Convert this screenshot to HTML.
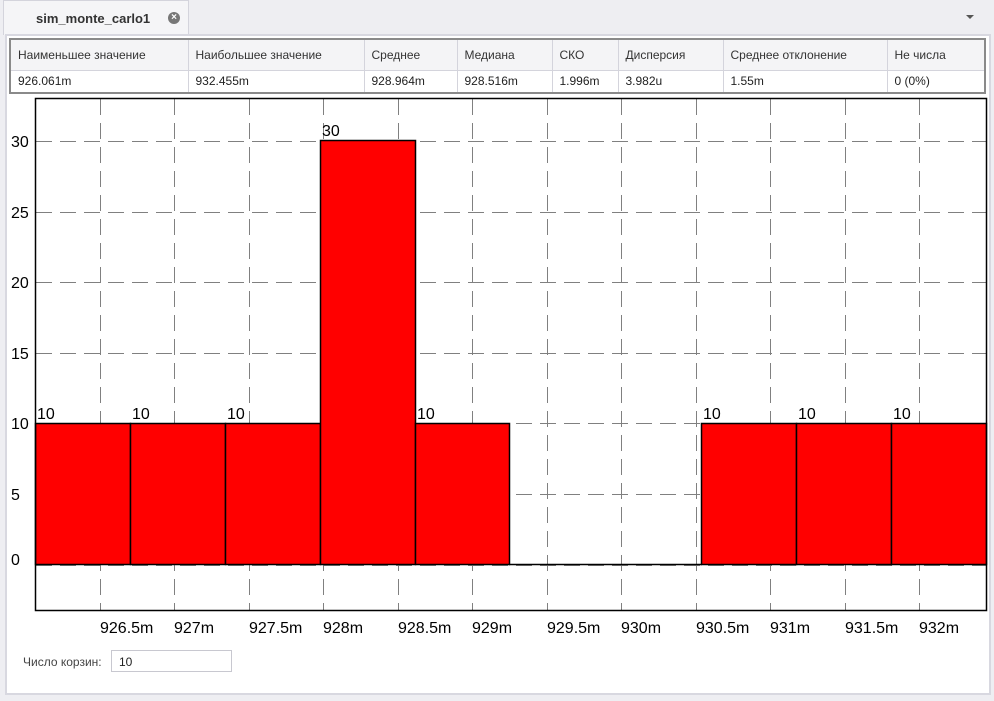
<!DOCTYPE html>
<html><head><meta charset="utf-8"><style>
body{margin:0;width:994px;height:701px;background:#eeeef2;font-family:"Liberation Sans","DejaVu Sans",sans-serif;position:relative;overflow:hidden}
.tab{position:absolute;left:3px;top:0;width:186px;height:35px;background:#f5f5f7;border:1px solid #d4d4dc;border-bottom:none;box-sizing:border-box}
.tab span{position:absolute;left:32px;top:10px;font-size:13px;font-weight:bold;color:#333}
.x{position:absolute;left:164px;top:11px;width:12px;height:12px;border-radius:50%;background:#777;color:#fff;font-size:10px;line-height:12px;text-align:center;font-weight:bold}
.dd{position:absolute;left:966px;top:15px;width:0;height:0;border-left:4px solid transparent;border-right:4px solid transparent;border-top:4px solid #555}
.panel{position:absolute;left:5px;top:34px;width:986px;height:661px;background:#fff;border:2px solid #d8d8e0;box-sizing:border-box}
table{position:absolute;left:9px;top:38px;width:977px;border-collapse:collapse;border:2px solid #8a8a8a;font-size:12px;color:#222;table-layout:fixed}
td{border-left:1px solid #d4d4dc;padding:0 7px;white-space:nowrap;overflow:hidden;box-sizing:border-box}
tr:first-child td{background:#f4f4f6;border-bottom:1px solid #d4d4dc;color:#333;height:31px}
tr:last-child td{height:23px}
.lbl{position:absolute;left:23px;top:655px;font-size:12px;color:#444}
.inp{position:absolute;left:111px;top:650px;width:121px;height:22px;border:1px solid #c8c8d0;box-sizing:border-box;font-size:12px;padding:4px 7px;color:#222}
</style></head><body>
<div class="tab"><span>sim_monte_carlo1</span><div class="x">×</div></div>
<div class="dd"></div>
<div class="panel"></div>
<table><colgroup><col style="width:178px"><col style="width:176px"><col style="width:93px"><col style="width:95px"><col style="width:66px"><col style="width:105px"><col style="width:164px"><col></colgroup>
<tr><td>Наименьшее значение</td><td>Наибольшее значение</td><td>Среднее</td><td>Медиана</td><td>СКО</td><td>Дисперсия</td><td>Среднее отклонение</td><td>Не числа</td></tr>
<tr><td>926.061m</td><td>932.455m</td><td>928.964m</td><td>928.516m</td><td>1.996m</td><td>3.982u</td><td>1.55m</td><td>0 (0%)</td></tr></table>
<svg style="position:absolute;left:0;top:0" width="994" height="701" font-family="Liberation Sans, sans-serif" font-size="16">
<g stroke="#808080" stroke-width="1" stroke-dasharray="16,8">
<line x1="100.5" y1="99" x2="100.5" y2="611"/><line x1="174.5" y1="99" x2="174.5" y2="611"/><line x1="249.5" y1="99" x2="249.5" y2="611"/><line x1="323.5" y1="99" x2="323.5" y2="611"/><line x1="398.5" y1="99" x2="398.5" y2="611"/><line x1="472.5" y1="99" x2="472.5" y2="611"/><line x1="547.5" y1="99" x2="547.5" y2="611"/><line x1="621.5" y1="99" x2="621.5" y2="611"/><line x1="696.5" y1="99" x2="696.5" y2="611"/><line x1="770.5" y1="99" x2="770.5" y2="611"/><line x1="845.5" y1="99" x2="845.5" y2="611"/><line x1="919.5" y1="99" x2="919.5" y2="611"/>
<line x1="36" y1="141.5" x2="986" y2="141.5"/><line x1="36" y1="212.5" x2="986" y2="212.5"/><line x1="36" y1="282.5" x2="986" y2="282.5"/><line x1="36" y1="353.5" x2="986" y2="353.5"/><line x1="36" y1="423.5" x2="986" y2="423.5"/><line x1="36" y1="494.5" x2="986" y2="494.5"/><line x1="36" y1="565.5" x2="986" y2="565.5"/>
</g>
<g fill="#f00" stroke="#000" stroke-width="1.5">
<rect x="35.5" y="423.5" width="95" height="141"/><rect x="130.5" y="423.5" width="95" height="141"/><rect x="225.5" y="423.5" width="95" height="141"/><rect x="320.5" y="140.5" width="95" height="424"/><rect x="415.5" y="423.5" width="94" height="141"/>
<rect x="701.5" y="423.5" width="95" height="141"/><rect x="796.5" y="423.5" width="95" height="141"/><rect x="891.5" y="423.5" width="95" height="141"/>
</g>
<line x1="509" y1="564.5" x2="702" y2="564.5" stroke="#000" stroke-width="1.5"/>
<rect x="35.5" y="98.5" width="951" height="512" fill="none" stroke="#000" stroke-width="1.5"/>
<g fill="#000">
<text x="37" y="419">10</text><text x="132" y="419">10</text><text x="227" y="419">10</text><text x="322" y="136">30</text><text x="417" y="419">10</text><text x="703" y="419">10</text><text x="798" y="419">10</text><text x="893" y="419">10</text>
<text x="11" y="147">30</text><text x="11" y="218">25</text><text x="11" y="288">20</text><text x="11" y="359">15</text><text x="11" y="429">10</text><text x="11" y="500">5</text><text x="11" y="565">0</text>
<text x="100" y="633">926.5m</text><text x="174" y="633">927m</text><text x="249" y="633">927.5m</text><text x="323" y="633">928m</text><text x="398" y="633">928.5m</text><text x="472" y="633">929m</text><text x="547" y="633">929.5m</text><text x="621" y="633">930m</text><text x="696" y="633">930.5m</text><text x="770" y="633">931m</text><text x="845" y="633">931.5m</text><text x="919" y="633">932m</text>
</g></svg>
<div class="lbl">Число корзин:</div><div class="inp">10</div>
</body></html>
